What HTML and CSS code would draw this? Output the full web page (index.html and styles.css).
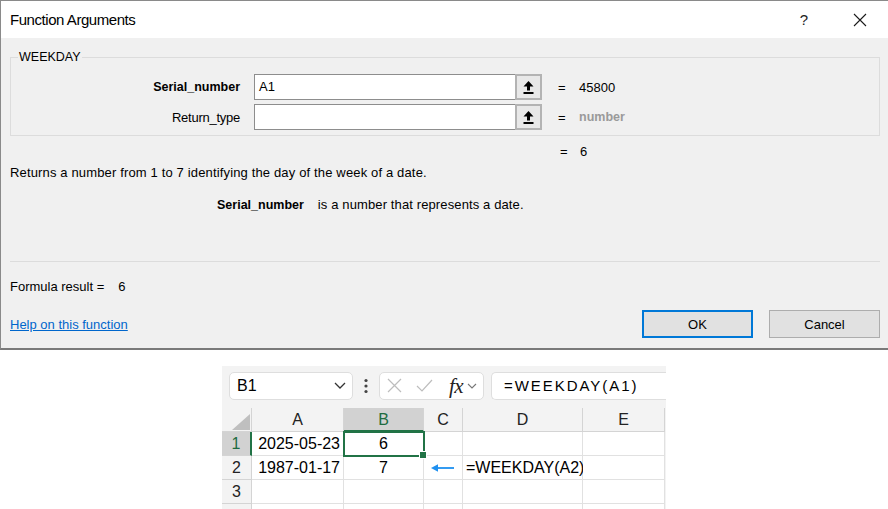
FILE: index.html
```html
<!DOCTYPE html>
<html>
<head>
<meta charset="utf-8">
<link rel="stylesheet" href="styles.css">
</head>
<body>
<div class="dialog">
  <div class="titlebar">
    <span class="title">Function Arguments</span>
    <span class="help">?</span>
    <span class="close"><svg width="14" height="14" viewBox="0 0 14 14"><path d="M1 1 L13 13 M13 1 L1 13" stroke="#1a1a1a" stroke-width="1.1" fill="none"/></svg></span>
  </div>
  <div class="dbody">
    <fieldset class="group">
      <legend>WEEKDAY</legend>
      <div class="arg">
        <span class="argname bold">Serial_number</span>
        <div class="field">
          <div class="input">A1</div>
          <div class="pick"><svg width="11" height="13" viewBox="0 0 11 13"><path d="M5.5 0 L10.5 5.5 H7 V9.5 H4 V5.5 H0.5 Z" fill="#000"/><rect x="0.5" y="11" width="10" height="2" fill="#000"/></svg></div>
        </div>
        <span class="eq">=</span>
        <span class="val">45800</span>
      </div>
      <div class="arg">
        <span class="argname">Return_type</span>
        <div class="field">
          <div class="input"></div>
          <div class="pick"><svg width="11" height="13" viewBox="0 0 11 13"><path d="M5.5 0 L10.5 5.5 H7 V9.5 H4 V5.5 H0.5 Z" fill="#000"/><rect x="0.5" y="11" width="10" height="2" fill="#000"/></svg></div>
        </div>
        <span class="eq">=</span>
        <span class="val hint">number</span>
      </div>
    </fieldset>
    <div class="resline"><span class="eq">=</span><span class="val">6</span></div>
    <p class="desc">Returns a number from 1 to 7 identifying the day of the week of a date.</p>
    <p class="argdesc"><span class="bold">Serial_number</span><span class="argtext">is a number that represents a date.</span></p>
    <div class="sep"></div>
    <p class="formula">Formula result =<span class="fres">6</span></p>
    <div class="footer">
      <a class="link" href="#">Help on this function</a>
      <div class="buttons">
        <button class="btn ok">OK</button>
        <button class="btn">Cancel</button>
      </div>
    </div>
  </div>
</div>

<div class="sheet">
  <div class="toolbar">
    <div class="namebox">
      <span>B1</span>
      <svg width="12" height="7" viewBox="0 0 12 7"><path d="M1 1 L6 6 L11 1" stroke="#333" stroke-width="1.3" fill="none"/></svg>
    </div>
    <svg class="dots" width="4" height="16" viewBox="0 0 4 16"><circle cx="2" cy="2.5" r="1.6" fill="#444"/><circle cx="2" cy="8" r="1.6" fill="#444"/><circle cx="2" cy="13.5" r="1.6" fill="#444"/></svg>
    <div class="fxbox">
      <svg width="15" height="15" viewBox="0 0 15 15"><path d="M1 1 L14 14 M14 1 L1 14" stroke="#bdbdbd" stroke-width="1.2" fill="none"/></svg>
      <svg class="chk" width="17" height="13" viewBox="0 0 17 13"><path d="M1 7 L6 12 L16 1" stroke="#bdbdbd" stroke-width="1.2" fill="none"/></svg>
      <span class="fx">fx</span>
      <svg class="fxchev" width="10" height="6" viewBox="0 0 10 6"><path d="M1 1 L5 5 L9 1" stroke="#777" stroke-width="1.1" fill="none"/></svg>
    </div>
    <div class="formulabar">=WEEKDAY(A1)</div>
  </div>
  <div class="grid">
    <div class="corner"><svg width="18" height="16" viewBox="0 0 18 16"><path d="M18 0 L18 16 L0 16 Z" fill="#bfbfbf"/></svg></div>
    <div class="ch">A</div>
    <div class="ch sel">B</div>
    <div class="ch">C</div>
    <div class="ch">D</div>
    <div class="ch">E</div>

    <div class="rh sel">1</div>
    <div class="cell right">2025-05-23</div>
    <div class="cell center active">6</div>
    <div class="cell"></div>
    <div class="cell"></div>
    <div class="cell"></div>

    <div class="rh">2</div>
    <div class="cell right">1987-01-17</div>
    <div class="cell center">7</div>
    <div class="cell center"><svg width="24" height="8" viewBox="0 0 24 8"><path d="M2 4 H23" stroke="#1e90f0" stroke-width="1.8"/><path d="M0 4 L7 0.3 L7 7.7 Z" fill="#1e90f0"/></svg></div>
    <div class="cell">=WEEKDAY(A2)</div>
    <div class="cell"></div>

    <div class="rh">3</div>
    <div class="cell"></div>
    <div class="cell"></div>
    <div class="cell"></div>
    <div class="cell"></div>
    <div class="cell"></div>

    <div class="rh"></div>
    <div class="cell"></div>
    <div class="cell"></div>
    <div class="cell"></div>
    <div class="cell"></div>
    <div class="cell"></div>
  </div>
</div>
</body>
</html>
```
FILE: styles.css
```css
* { box-sizing: border-box; }
html, body { margin: 0; padding: 0; background: #fff; }
body { width: 888px; height: 509px; overflow: hidden; font-family: "Liberation Sans", Arial, sans-serif; color: #000; }

.dialog {
  width: 888px;
  border-top: 1px solid #8a8a8a;
  border-left: 1px solid #8a8a8a;
  border-bottom: 2px solid #7a7a7a;
  background: #f0f0f0;
}
.titlebar {
  height: 37px;
  background: #fff;
  display: flex;
  align-items: center;
  padding-left: 9px;
}
.title { font-size: 15px; letter-spacing: -0.45px; flex: 1; color: #000; }
.help { font-size: 15px; color: #222; margin-right: 45px; }
.close { display: flex; margin-right: 21px; }

.dbody { padding: 11px 8px 10px 9px; font-size: 13px; }
.bold { font-weight: bold; font-size: 12.5px; }

.group {
  margin: 0;
  border: 1px solid #dcdcdc;
  padding: 9px 0 5px 7px;
  min-width: 0;
}
.group legend { padding: 0 1px; font-size: 12.5px; line-height: 16px; color: #000; }

.arg { display: flex; align-items: center; height: 26px; margin-bottom: 4px; }
.arg:last-child { margin-bottom: 0; }
.argname { width: 222px; text-align: right; margin-right: 14px; }
.argname:not(.bold) { letter-spacing: -0.25px; }
.field { display: flex; height: 26px; width: 288px; }
.input {
  flex: 1;
  background: #fff;
  border: 1px solid #8d8d8d;
  border-right: none;
  padding: 4px 4px;
  line-height: 16px;
}
.pick {
  width: 27px;
  border: 2px solid #b3b3b3;
  background: #e8e8e8;
  display: flex;
  align-items: center;
  justify-content: center;
}
.eq { margin-left: 16px; width: 8px; }
.val { margin-left: 13px; }
.hint { color: #9a9a9a; font-weight: bold; font-size: 12.5px; }

.resline { margin: 8px 0 0 0; padding-left: 550px; line-height: 16px; display: flex; }
.resline .eq { margin-left: 0; }
.resline .val { margin-left: 12px; }

p { margin: 0; line-height: 16px; }
.desc { margin-top: 5px; letter-spacing: 0.15px; }
.argdesc { margin-top: 16px; padding-left: 207px; }
.argtext { margin-left: 14px; letter-spacing: 0.12px; }

.sep { height: 1px; background: #dcdcdc; margin: 48px 0 0 0; }
.formula { margin-top: 17px; }
.fres { margin-left: 14px; }

.footer { display: flex; align-items: center; justify-content: space-between; margin-top: 15px; }
.link { color: #0066cc; text-decoration: underline; font-size: 13px; }
.buttons { display: flex; gap: 16px; }
.btn {
  width: 111px;
  height: 28px;
  background: #e1e1e1;
  border: 1px solid #adadad;
  font-family: "Liberation Sans", Arial, sans-serif;
  font-size: 13px;
  color: #000;
  padding: 0;
}
.btn.ok { border: 2px solid #0078d7; }

/* spreadsheet */
.sheet {
  margin: 16px 0 0 222px;
  width: 444px;
  height: 143px;
  background: #f3f3f3;
  overflow: hidden;
}
.toolbar { display: flex; align-items: center; height: 42px; padding: 0 0 3px 7px; }
.namebox {
  width: 124px;
  height: 28px;
  background: #fff;
  border: 1px solid #dedede;
  border-radius: 5px;
  display: flex;
  align-items: center;
  justify-content: space-between;
  padding: 0 6px 0 7px;
  font-size: 16px;
}
.dots { margin-left: 11px; }
.fxbox {
  margin-left: 11px;
  width: 105px;
  height: 28px;
  background: #fff;
  border: 1px solid #dedede;
  border-radius: 5px;
  display: flex;
  align-items: center;
  padding-left: 7px;
}
.chk { margin-left: 14px; }
.fx { font-family: "Liberation Serif", "Times New Roman", serif; font-style: italic; font-size: 21px; margin-left: 16px; letter-spacing: -0.5px; color: #222; line-height: 20px; }
.fxchev { margin-left: 4px; }
.formulabar {
  margin-left: 7px;
  flex: 1;
  height: 28px;
  background: #fff;
  border: 1px solid #dedede;
  border-right: none;
  border-radius: 5px 0 0 5px;
  padding-left: 12px;
  font-size: 15px;
  letter-spacing: 1.95px;
  line-height: 26px;
  white-space: nowrap;
}

.grid {
  display: grid;
  grid-template-columns: 30px 92px 80px 39px 120px 82px;
  grid-auto-rows: 24px;
  font-size: 16px;
}
.corner { background: #f3f3f3; border-right: 1px solid #d4d4d4; border-bottom: 1px solid #d4d4d4; display: flex; align-items: flex-end; justify-content: flex-end; padding: 0 1px 1px 0; }
.ch {
  background: #f3f3f3;
  border-right: 1px solid #d4d4d4;
  border-bottom: 1px solid #d4d4d4;
  text-align: center;
  line-height: 23px;
  color: #222;
}
.ch.sel { background: #d2d2d2; color: #1e6b40; border-bottom: 2px solid #217346; }
.rh {
  background: #f3f3f3;
  border-right: 1px solid #d4d4d4;
  border-bottom: 1px solid #d4d4d4;
  text-align: center;
  line-height: 23px;
  color: #222;
}
.rh.sel { background: #d2d2d2; color: #1e6b40; border-right: 2px solid #217346; }
.cell {
  background: #fff;
  border-right: 1px solid #e1e1e1;
  border-bottom: 1px solid #e1e1e1;
  line-height: 23px;
  padding: 0 3px;
  white-space: nowrap;
  overflow: visible;
}
.cell.right { text-align: right; }
.cell.center { text-align: center; }
.cell.center svg { vertical-align: middle; margin-top: -2px; }
.cell.active { position: relative; outline: 2px solid #217346; outline-offset: -1px; z-index: 1; }
.cell.active::after {
  content: "";
  position: absolute;
  right: -4px;
  bottom: -4px;
  width: 6px;
  height: 6px;
  background: #217346;
  border: 1px solid #fff;
}
```
